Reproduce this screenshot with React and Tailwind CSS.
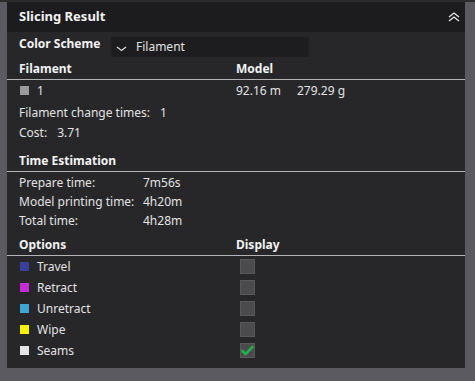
const options = [
  { name: 'Travel', color: 'bg-[#3a3f9c]', checked: false },
  { name: 'Retract', color: 'bg-[#c62bd8]', checked: false },
  { name: 'Unretract', color: 'bg-[#3fa8d2]', checked: false },
  { name: 'Wipe', color: 'bg-[#f4f400]', checked: false },
  { name: 'Seams', color: 'bg-[#e4e4e4]', checked: true },
];

const times = [
  ['Prepare time:', '7m56s'],
  ['Model printing time:', '4h20m'],
  ['Total time:', '4h28m'],
];

const Checkbox = ({ checked }) => (
  <div className="w-[15px] h-[15px] bg-[#4b4b4e] border border-[#58585b] flex items-center justify-center">
    {checked && (
      <svg width="13" height="11" viewBox="0 0 13 11">
        <path d="M1.5 6 L4.5 9 L11.5 2" fill="none" stroke="#1fae4b" strokeWidth="2.6" strokeLinecap="round" strokeLinejoin="round" />
      </svg>
    )}
  </div>
);

const SectionHead = ({ left, right, className = '' }) => (
  <>
    <div className={`flex items-center h-[21px] px-[12px] font-bold text-[#f2f2f2] ${className}`}>
      <div className="w-[217px]">{left}</div>
      {right && <div>{right}</div>}
    </div>
    <div className="h-px bg-[#b4b4b6]" />
  </>
);

export default function App() {
  return (
    <div
      className="w-[475px] h-[381px] bg-[#5b5a61] text-[12px] text-[#e2e2e2]"
      style={{ fontFamily: '"Noto Sans", Roboto, sans-serif' }}
    >
      <div className="h-[2px] bg-[#2b2b2e]" />
      <div className="ml-[7px] w-[458px] bg-[#27272a] pb-[7px]">
        {/* Header */}
        <div className="h-[30px] bg-[#1c1c1e] flex items-center justify-between pl-[12px] pr-[5px]">
          <span className="font-bold text-[13px] text-[#f2f2f2]">Slicing Result</span>
          <svg width="12" height="10" viewBox="0 0 12 10">
            <path d="M1 5 L6 1 L11 5 M1 9 L6 5 L11 9" fill="none" stroke="#e8e8e8" strokeWidth="1.3" />
          </svg>
        </div>

        {/* Color scheme */}
        <div className="flex items-start pt-[4px] pl-[12px]">
          <span className="font-bold text-[#f2f2f2] w-[92px] leading-[14px] mt-[1px]">Color Scheme</span>
          <div className="w-[198px] h-[20px] bg-[#1d1d1f] rounded-[2px] flex items-center pl-[5px] mt-[1px]">
            <svg width="11" height="6" viewBox="0 0 11 6" className="mt-[3px]">
              <path d="M1 1 L5.5 4.5 L10 1" fill="none" stroke="#dcdcdc" strokeWidth="1.2" />
            </svg>
            <span className="ml-[9px]">Filament</span>
          </div>
        </div>

        <SectionHead left="Filament" right="Model" className="mt-[1px]" />
        <div className="flex items-center h-[21px] px-[12px]">
          <div className="w-[217px] flex items-center">
            <div className="w-[9px] h-[9px] bg-[#9a9a9a] ml-px" />
            <span className="ml-[8px]">1</span>
          </div>
          <span className="w-[61px]">92.16 m</span>
          <span>279.29 g</span>
        </div>
        <div className="flex items-center h-[20px] px-[12px] mt-[2px]">
          <span>Filament change times:</span>
          <span className="ml-[10px]">1</span>
        </div>
        <div className="flex items-center h-[19px] px-[12px]">
          <span>Cost:</span>
          <span className="ml-[10px]">3.71</span>
        </div>

        <SectionHead left="Time Estimation" className="mt-[8px]" />
        <div className="mt-px">
          {times.map(([label, value]) => (
            <div key={label} className="flex items-center h-[19px] px-[12px]">
              <span className="w-[124px]">{label}</span>
              <span>{value}</span>
            </div>
          ))}
        </div>

        <SectionHead left="Options" right="Display" className="mt-[4px]" />
        <div>
          {options.map((o) => (
            <div key={o.name} className="flex items-center h-[21px] px-[12px]">
              <div className="w-[217px] flex items-center">
                <div className={`w-[9px] h-[9px] ml-px ${o.color}`} />
                <span className="ml-[8px]">{o.name}</span>
              </div>
              <div className="ml-[4px]">
                <Checkbox checked={o.checked} />
              </div>
            </div>
          ))}
        </div>
      </div>
    </div>
  );
}
